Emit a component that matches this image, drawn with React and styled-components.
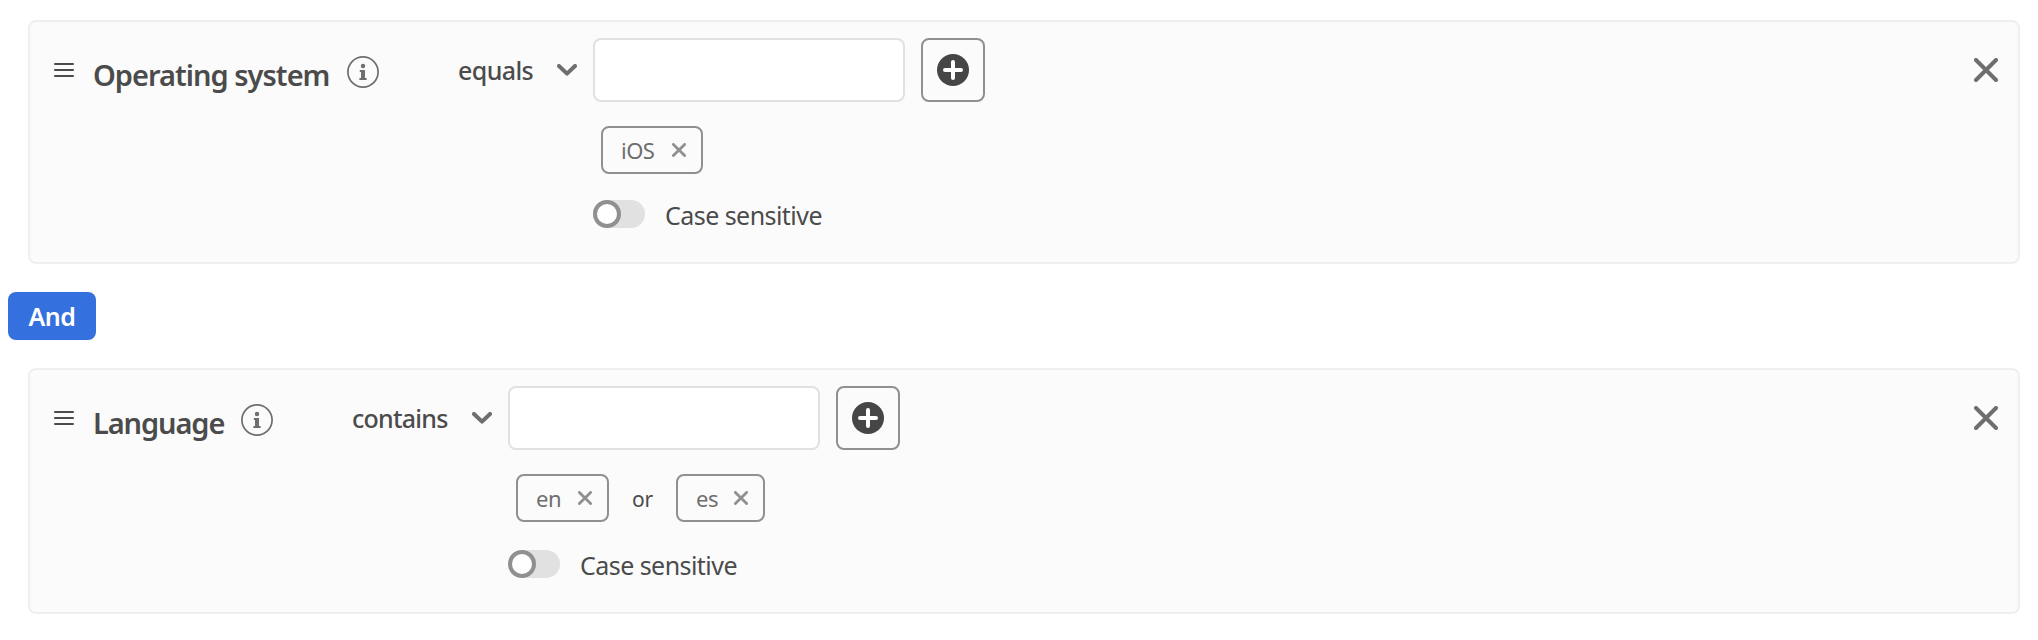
import React from "react";
import styled, { createGlobalStyle } from "styled-components";

const GlobalStyle = createGlobalStyle`
  * { box-sizing: border-box; }
  body {
    margin: 0;
    background: #fff;
    color: #4b4b4b;
    font-family: "Noto Sans", "Open Sans", sans-serif;
  }
  svg { display: block; flex: none; }
`;

const Page = styled.main`
  display: flex;
  flex-direction: column;
  align-items: flex-start;
  height: 640px;
  padding: 20px 18px 26px 8px;
`;

const Card = styled.section`
  display: flex;
  align-items: flex-start;
  align-self: stretch;
  height: ${(p) => p.$height}px;
  margin-left: 20px;
  padding: 16px 20px 0 24px;
  border: 2px solid #efefef;
  border-radius: 8px;
  background: #fbfbfb;
`;

const Header = styled.div`
  display: flex;
  align-items: center;
  flex: none;
  width: ${(p) => p.$width}px;
  height: 64px;
  padding-right: 16px;
`;

const Label = styled.span`
  flex: none;
  white-space: nowrap;
`;

const Title = styled(Label)`
  width: ${(p) => p.$width}px;
  margin-left: 19px;
  padding-top: 9px;
  font-size: 29px;
  font-weight: 600;
  line-height: 40px;
  letter-spacing: ${(p) => p.$tracking}px;
`;

const InfoButton = styled.span`
  margin-left: 18px;
  padding-top: 4px;
`;

const Operator = styled.div`
  display: flex;
  align-items: center;
  margin-left: auto;
`;

const OperatorLabel = styled(Label)`
  width: ${(p) => p.$width}px;
  margin-right: 23px;
  font-size: 25px;
  font-weight: 500;
  line-height: 36px;
  letter-spacing: ${(p) => p.$tracking}px;
`;

const Values = styled.div`
  display: flex;
  flex-direction: column;
`;

const Entry = styled.div`
  display: flex;
  gap: 16px;
`;

const Field = styled.input`
  width: 312px;
  height: 64px;
  padding: 0 20px;
  border: 2px solid #e1e1e1;
  border-radius: 8px;
  background: #fff;
  font: inherit;
  font-size: 25px;
`;

const AddButton = styled.button`
  display: flex;
  align-items: center;
  justify-content: center;
  width: 64px;
  height: 64px;
  padding: 0;
  border: 2px solid #909090;
  border-radius: 8px;
  background: #fbfbfb;
`;

const Tags = styled.div`
  display: flex;
  align-items: center;
  margin: 24px 0 0 8px;
`;

const Tag = styled.span`
  display: flex;
  align-items: center;
  justify-content: space-between;
  width: ${(p) => p.$width}px;
  height: 48px;
  padding: 0 15px 0 18px;
  border: 2px solid #909090;
  border-radius: 8px;
  color: #6e6e6e;
  font-size: 22px;
  line-height: 30px;
`;

const TagText = styled(Label)`
  padding-bottom: 1px;
  letter-spacing: -0.5px;
`;

const Joiner = styled(Label)`
  width: 67px;
  padding-top: 1px;
  text-align: center;
  font-size: 21px;
  line-height: 30px;
  letter-spacing: -0.3px;
`;

const Setting = styled.label`
  display: flex;
  align-items: center;
  height: 28px;
  margin-top: ${(p) => p.$top}px;
`;

const Track = styled.span`
  width: 52px;
  height: 28px;
  border-radius: 14px;
  background: #e1e1e1;
`;

const Knob = styled.span`
  display: block;
  width: 28px;
  height: 28px;
  border: 4px solid #909090;
  border-radius: 50%;
  background: #fff;
`;

const SettingText = styled(Label)`
  margin-left: 20px;
  padding-top: 1px;
  font-size: 25px;
  line-height: 36px;
  letter-spacing: -0.55px;
`;

const CloseButton = styled.button`
  display: flex;
  align-items: center;
  height: 64px;
  margin-left: auto;
  padding: 0;
  border: 0;
  background: none;
`;

const Conjunction = styled.button`
  display: flex;
  align-items: center;
  justify-content: center;
  width: 88px;
  height: 48px;
  margin: 28px 0;
  padding: 0 0 1px;
  border: 0;
  border-radius: 8px;
  background: #3470de;
  color: #fff;
  font-family: inherit;
  font-size: 25px;
  font-weight: 600;
  line-height: 36px;
  letter-spacing: -0.4px;
`;

const HandleIcon = () => (
  <svg width="20" height="16" viewBox="0 0 20 16" stroke="#4b4b4b" strokeWidth="2" strokeLinecap="round">
    <path d="M1 2H19M1 8H19M1 14H19" />
  </svg>
);

const InfoIcon = () => (
  <svg width="32" height="32" viewBox="0 0 32 32" fill="#6e6e6e">
    <circle cx="16" cy="16" r="15.1" fill="none" stroke="#6e6e6e" strokeWidth="1.7" />
    <circle cx="16" cy="10" r="2.2" />
    <path d="M12.8 14H18V22H19.6V24H12.4V22H14V16H12.8Z" />
  </svg>
);

const ChevronIcon = () => (
  <svg width="20" height="12" viewBox="0 0 20 12" fill="none" stroke="#6e6e6e" strokeWidth="4" strokeLinecap="round" strokeLinejoin="round">
    <path d="M2 2L10 9.6L18 2" />
  </svg>
);

const PlusIcon = () => (
  <svg width="32" height="32" viewBox="0 0 32 32">
    <circle cx="16" cy="16" r="16" fill="#464646" />
    <path d="M16 8V24M8 16H24" stroke="#fff" strokeWidth="4" strokeLinecap="round" />
  </svg>
);

const CrossIcon = ({ size, weight, color }) => (
  <svg width={size} height={size} viewBox={`0 0 ${size} ${size}`} stroke={color} strokeWidth={weight} strokeLinecap="round">
    <path d={`M${weight / 2} ${weight / 2}L${size - weight / 2} ${size - weight / 2}M${size - weight / 2} ${weight / 2}L${weight / 2} ${size - weight / 2}`} />
  </svg>
);

const rules = [
  {
    title: "Operating system", titleWidth: 236, titleTracking: -0.98,
    operator: "equals", operatorWidth: 76, operatorTracking: -0.6,
    headerWidth: 539, height: 244, settingTop: 26,
    tags: [{ text: "iOS", width: 102 }],
  },
  {
    title: "Language", titleWidth: 130, titleTracking: -1.1,
    operator: "contains", operatorWidth: 97, operatorTracking: -0.75,
    headerWidth: 454, height: 246, settingTop: 28,
    tags: [{ text: "en", width: 93 }, { text: "es", width: 89 }],
  },
];

const Rule = ({ rule }) => (
  <Card $height={rule.height}>
    <Header $width={rule.headerWidth}>
      <HandleIcon />
      <Title $width={rule.titleWidth} $tracking={rule.titleTracking}>{rule.title}</Title>
      <InfoButton><InfoIcon /></InfoButton>
      <Operator>
        <OperatorLabel $width={rule.operatorWidth} $tracking={rule.operatorTracking}>{rule.operator}</OperatorLabel>
        <ChevronIcon />
      </Operator>
    </Header>
    <Values>
      <Entry>
        <Field aria-label={rule.title} />
        <AddButton aria-label="Add"><PlusIcon /></AddButton>
      </Entry>
      <Tags>
        {rule.tags.map((tag, i) => (
          <React.Fragment key={tag.text}>
            {i > 0 && <Joiner>or</Joiner>}
            <Tag $width={tag.width}>
              <TagText>{tag.text}</TagText>
              <CrossIcon size={14} weight={2.8} color="#909090" />
            </Tag>
          </React.Fragment>
        ))}
      </Tags>
      <Setting $top={rule.settingTop}>
        <Track><Knob /></Track>
        <SettingText>Case sensitive</SettingText>
      </Setting>
    </Values>
    <CloseButton aria-label="Remove"><CrossIcon size={24} weight={4} color="#6e6e6e" /></CloseButton>
  </Card>
);

export default function App() {
  return (
    <>
      <GlobalStyle />
      <Page>
        <Rule rule={rules[0]} />
        <Conjunction>And</Conjunction>
        <Rule rule={rules[1]} />
      </Page>
    </>
  );
}
